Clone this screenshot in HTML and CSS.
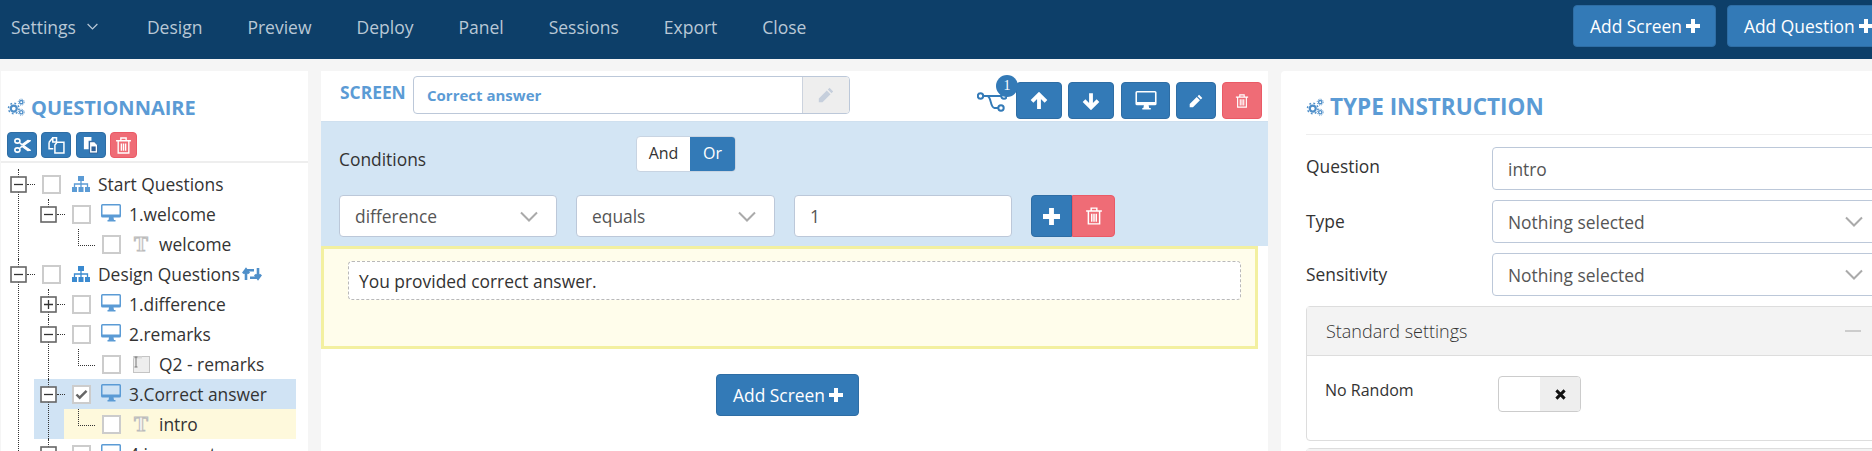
FILE: index.html
```html
<!DOCTYPE html>
<html lang="en">
<head>
  <meta charset="UTF-8" />
  <title>Questionnaire Designer</title>
  <link rel="stylesheet" href="styles.css">
</head>
<body>
  <svg class="sprites" width="0" height="0">
    <symbol id="i-cogs" viewBox="0 0 24 24">
      <circle cx="9" cy="14" r="4" fill="none" stroke="currentColor" stroke-width="3"/>
      <circle cx="9" cy="14" r="7" fill="none" stroke="currentColor" stroke-width="2" stroke-dasharray="2.4 3.1"/>
      <circle cx="19" cy="5.500" r="2.200" fill="none" stroke="currentColor" stroke-width="1.800"/>
      <circle cx="19" cy="5.500" r="4" fill="none" stroke="currentColor" stroke-width="1.300" stroke-dasharray="1.500 1.640"/>
      <circle cx="19" cy="19" r="2.200" fill="none" stroke="currentColor" stroke-width="1.800"/>
      <circle cx="19" cy="19" r="4" fill="none" stroke="currentColor" stroke-width="1.300" stroke-dasharray="1.500 1.640"/>
    </symbol>
    <symbol id="i-sitemap" viewBox="0 0 18 16">
      <rect x="6" y="0" width="6" height="5" fill="currentColor"/>
      <rect x="0" y="11" width="5" height="5" fill="currentColor"/>
      <rect x="6.500" y="11" width="5" height="5" fill="currentColor"/>
      <rect x="13" y="11" width="5" height="5" fill="currentColor"/>
      <path d="M9 5v6M2.500 11V8h13v3" fill="none" stroke="currentColor" stroke-width="1.300"/>
    </symbol>
    <symbol id="i-desktop" viewBox="0 0 20 18">
      <path fill-rule="evenodd" fill="currentColor" d="M1.500 0h17A1.500 1.500 0 0 1 20 1.500v10.500a1.500 1.500 0 0 1-1.500 1.500h-6l.5 2.500h1.500v1.500h-8v-1.500H7.500l.5-2.500H1.500A1.500 1.500 0 0 1 0 12V1.500A1.500 1.500 0 0 1 1.500 0zM1.500 1.500V10.500h17V1.500z"/>
    </symbol>
    <symbol id="i-scissors" viewBox="0 0 16 14">
      <ellipse cx="3.200" cy="2.800" rx="2.400" ry="2" fill="none" stroke="currentColor" stroke-width="1.500"/>
      <ellipse cx="3.200" cy="11.200" rx="2.400" ry="2" fill="none" stroke="currentColor" stroke-width="1.500"/>
      <path d="M5 4.200 15.500 11.500 13 11.800 7 7.500M5 9.800 15.500 2.500 13 2.200 7 6.500" fill="currentColor" stroke="currentColor" stroke-width="1"/>
    </symbol>
    <symbol id="i-copy" viewBox="0 0 16 16">
      <path d="M4.500.8h3.500v4H4.500zM1 5l3.500-4.200M1 5v6h4" fill="none" stroke="currentColor" stroke-width="1.400"/>
      <path d="M8.500 5h6.500v10H6.500V7.500z" fill="none" stroke="currentColor" stroke-width="1.400"/>
    </symbol>
    <symbol id="i-paste" viewBox="0 0 16 18">
      <path d="M1 0h8v4H6v9H1z" fill="currentColor"/>
      <path d="M7 5h5l3.500 3.500V17H7z" fill="currentColor" stroke="#2e5f97" stroke-width="1"/>
      <path d="M9 15h4.500v-5H9z" fill="#2e5f97"/>
    </symbol>
    <symbol id="i-trash" viewBox="0 0 14 16">
      <path d="M0 3.500h14M4.500 3.500V1h5v2.500M2 3.500V15h10V3.500M5 6v7M7 6v7M9 6v7" fill="none" stroke="currentColor" stroke-width="1.300"/>
    </symbol>
    <symbol id="i-up" viewBox="0 0 16 16">
      <path d="M8 15V2.500M1.800 8.300 8 2.200l6.200 6.100" fill="none" stroke="currentColor" stroke-width="3.400"/>
    </symbol>
    <symbol id="i-down" viewBox="0 0 16 16">
      <path d="M8 1v12.500M1.800 7.700 8 13.800l6.200-6.100" fill="none" stroke="currentColor" stroke-width="3.400"/>
    </symbol>
    <symbol id="i-pencil" viewBox="0 0 16 16">
      <path d="M11.500 .8 15.200 4.500 13.500 6.200 9.800 2.500zM8.800 3.500 12.500 7.200 4.500 15.200H.8V11.500z" fill="currentColor"/>
    </symbol>
    <symbol id="i-plus" viewBox="0 0 14 14">
      <path d="M7 0v14M0 7h14" fill="none" stroke="currentColor" stroke-width="4"/>
    </symbol>
    <symbol id="i-times" viewBox="0 0 12 12">
      <path d="M1.500 1.500 10.500 10.500M10.500 1.500 1.500 10.500" fill="none" stroke="currentColor" stroke-width="3.200"/>
    </symbol>
    <symbol id="i-retweet" viewBox="0 0 20 14">
      <path d="M4 13V3.200h8M1 6.500 4 2.500l3 4M16 1v9.800H8M13 7.500l3 4 3-4" fill="none" stroke="currentColor" stroke-width="2.600"/>
    </symbol>
    <symbol id="i-branch" viewBox="0 0 30 22">
      <circle cx="3.500" cy="6" r="2.700" fill="none" stroke="currentColor" stroke-width="2"/>
      <circle cx="27" cy="6" r="2.700" fill="none" stroke="currentColor" stroke-width="2"/>
      <circle cx="24" cy="18" r="2.700" fill="none" stroke="currentColor" stroke-width="2"/>
      <path d="M6.200 6h18M10.500 6c4 1 2.500 11.500 7 12h3.800" fill="none" stroke="currentColor" stroke-width="2"/>
    </symbol>
    <symbol id="i-chevron" viewBox="0 0 18 11">
      <path d="M1 1.500 9 9.500l8-8" fill="none" stroke="currentColor" stroke-width="2"/>
    </symbol>
    <symbol id="i-minusbox" viewBox="0 0 17 17">
      <rect x="1" y="1" width="15" height="15" fill="#fff" stroke="#666" stroke-width="1.600"/>
      <path d="M4 8.500h9" stroke="#333" stroke-width="1.300"/>
    </symbol>
    <symbol id="i-plusbox" viewBox="0 0 17 17">
      <rect x="1" y="1" width="15" height="15" fill="#fff" stroke="#666" stroke-width="1.600"/>
      <path d="M4 8.500h9M8.500 4v9" stroke="#333" stroke-width="1.300"/>
    </symbol>
    <symbol id="i-check" viewBox="0 0 14 12">
      <path d="M1.500 6 5 9.500 12.500 2" fill="none" stroke="currentColor" stroke-width="2.600"/>
    </symbol>
    <symbol id="i-textarea" viewBox="0 0 17 17">
      <rect x=".5" y=".5" width="16" height="16" fill="#eee" stroke="#c4c4c4"/>
      <path d="M0 1.500h9" stroke="#d8d8d8" stroke-width="2"/>
      <path d="M3 1v10M1.500 1h3M1.500 11h3" fill="none" stroke="#777" stroke-width="1"/>
    </symbol>
  </svg>

  <header class="topbar">
    <nav class="nav">
      <a class="nav-item nav-settings">Settings <svg class="nav-chev"><use href="#i-chevron"/></svg></a>
      <a class="nav-item">Design</a>
      <a class="nav-item">Preview</a>
      <a class="nav-item">Deploy</a>
      <a class="nav-item">Panel</a>
      <a class="nav-item">Sessions</a>
      <a class="nav-item">Export</a>
      <a class="nav-item">Close</a>
    </nav>
    <div class="top-actions">
      <button class="btn btn-add">Add Screen <svg class="ico-plus"><use href="#i-plus"/></svg></button>
      <button class="btn btn-add">Add Question <svg class="ico-plus"><use href="#i-plus"/></svg></button>
    </div>
  </header>

  <main class="layout">
    <section class="panel tree-panel">
      <h2 class="tree-title"><svg class="ico-cogs"><use href="#i-cogs"/></svg>QUESTIONNAIRE</h2>
      <div class="tree-tools">
        <button class="btn tool"><svg class="tool-ico"><use href="#i-scissors"/></svg></button>
        <button class="btn tool"><svg class="tool-ico"><use href="#i-copy"/></svg></button>
        <button class="btn tool"><svg class="tool-ico"><use href="#i-paste"/></svg></button>
        <button class="btn tool tool-del"><svg class="tool-ico"><use href="#i-trash"/></svg></button>
      </div>
      <ul class="tree">
        <li class="node">
          <div class="row">
            <svg class="exp"><use href="#i-minusbox"/></svg>
            <span class="check"></span>
            <svg class="ico-map"><use href="#i-sitemap"/></svg>
            <span>Start Questions</span>
          </div>
          <ul class="sub">
            <li class="node node-end">
              <div class="row">
                <svg class="exp"><use href="#i-minusbox"/></svg>
                <span class="check"></span>
                <svg class="ico-screen"><use href="#i-desktop"/></svg>
                <span>1.welcome</span>
              </div>
              <ul class="sub">
                <li class="leaf">
                  <div class="row row-leaf">
                    <span class="check"></span>
                    <span class="t-icon">T</span>
                    <span>welcome</span>
                  </div>
                </li>
              </ul>
            </li>
          </ul>
        </li>
        <li class="node">
          <div class="row">
            <svg class="exp"><use href="#i-minusbox"/></svg>
            <span class="check"></span>
            <svg class="ico-map ico-map-on"><use href="#i-sitemap"/></svg>
            <span>Design Questions</span><svg class="ico-loop"><use href="#i-retweet"/></svg>
          </div>
          <ul class="sub">
            <li class="node">
              <div class="row">
                <svg class="exp"><use href="#i-plusbox"/></svg>
                <span class="check"></span>
                <svg class="ico-screen"><use href="#i-desktop"/></svg>
                <span>1.difference</span>
              </div>
            </li>
            <li class="node">
              <div class="row">
                <svg class="exp"><use href="#i-minusbox"/></svg>
                <span class="check"></span>
                <svg class="ico-screen"><use href="#i-desktop"/></svg>
                <span>2.remarks</span>
              </div>
              <ul class="sub">
                <li class="leaf">
                  <div class="row row-leaf">
                    <span class="check"></span>
                    <svg class="ta-icon"><use href="#i-textarea"/></svg>
                    <span>Q2 - remarks</span>
                  </div>
                </li>
              </ul>
            </li>
            <li class="node selected">
              <div class="row">
                <svg class="exp"><use href="#i-minusbox"/></svg>
                <span class="check"><svg class="check-mark"><use href="#i-check"/></svg></span>
                <svg class="ico-screen"><use href="#i-desktop"/></svg>
                <span>3.Correct answer</span>
              </div>
              <ul class="sub">
                <li class="leaf current">
                  <div class="row row-leaf">
                    <span class="check"></span>
                    <span class="t-icon">T</span>
                    <span>intro</span>
                  </div>
                </li>
              </ul>
            </li>
            <li class="node">
              <div class="row">
                <svg class="exp"><use href="#i-minusbox"/></svg>
                <span class="check"></span>
                <svg class="ico-screen"><use href="#i-desktop"/></svg>
                <span>4.incorrect answer</span>
              </div>
            </li>
          </ul>
        </li>
      </ul>
    </section>

    <section class="panel screen-panel">
      <div class="screen-head">
        <label class="screen-label">SCREEN</label>
        <div class="screen-name">
          <span class="screen-value">Correct answer</span>
          <span class="screen-addon"><svg class="addon-ico"><use href="#i-pencil"/></svg></span>
        </div>
        <div class="screen-tools">
          <span class="branch">
            <svg class="branch-ico"><use href="#i-branch"/></svg>
            <span class="badge">1</span>
          </span>
          <button class="btn head-btn"><svg class="head-ico"><use href="#i-up"/></svg></button>
          <button class="btn head-btn"><svg class="head-ico"><use href="#i-down"/></svg></button>
          <button class="btn head-btn head-wide"><svg class="screen-ico"><use href="#i-desktop"/></svg></button>
          <button class="btn head-btn head-small"><svg class="pen-ico"><use href="#i-pencil"/></svg></button>
          <button class="btn head-btn head-small tool-del"><svg class="pen-ico"><use href="#i-trash"/></svg></button>
        </div>
      </div>

      <div class="conditions">
        <div class="cond-top">
          <span class="cond-label">Conditions</span>
          <div class="andor">
            <span class="andor-opt">And</span>
            <span class="andor-opt andor-on">Or</span>
          </div>
        </div>
        <div class="cond-row">
          <div class="field cond-var">difference<svg class="chev"><use href="#i-chevron"/></svg></div>
          <div class="field cond-op">equals<svg class="chev"><use href="#i-chevron"/></svg></div>
          <div class="field cond-val">1</div>
          <div class="cond-btns">
            <button class="btn cond-btn"><svg class="cond-ico"><use href="#i-plus"/></svg></button>
            <button class="btn cond-btn tool-del"><svg class="cond-trash"><use href="#i-trash"/></svg></button>
          </div>
        </div>
      </div>

      <div class="question-box">
        <div class="question-text">You provided correct answer.</div>
      </div>

      <div class="screen-foot">
        <button class="btn btn-add">Add Screen <svg class="ico-plus"><use href="#i-plus"/></svg></button>
      </div>
    </section>

    <section class="panel type-panel">
      <h2 class="type-title"><svg class="ico-cogs-sm"><use href="#i-cogs"/></svg>TYPE INSTRUCTION</h2>
      <div class="form-row">
        <label>Question</label>
        <div class="field">intro</div>
      </div>
      <div class="form-row">
        <label>Type</label>
        <div class="field field-muted">Nothing selected<svg class="chev"><use href="#i-chevron"/></svg></div>
      </div>
      <div class="form-row">
        <label>Sensitivity</label>
        <div class="field field-muted">Nothing selected<svg class="chev"><use href="#i-chevron"/></svg></div>
      </div>
      <div class="settings">
        <div class="settings-head">
          <span>Standard settings</span>
          <span class="settings-min"></span>
        </div>
        <div class="settings-body">
          <label>No Random</label>
          <div class="toggle">
            <span class="toggle-off"></span>
            <span class="toggle-x"><svg class="x-ico"><use href="#i-times"/></svg></span>
          </div>
        </div>
      </div>
      <div class="settings settings-next">
        <div class="settings-head"></div>
      </div>
    </section>
  </main>
</body>
</html>
```

FILE: styles.css
```css
* {
  box-sizing: border-box;
}
html, body {
  height: 100%;
  overflow: hidden;
}
body {
  margin: 0;
  background: #f5f5f5;
  color: #333;
  font-family: "Open Sans", "Liberation Sans", sans-serif;
  font-size: 17.4px;
}
ul {
  list-style: none;
  margin: 0;
  padding: 0;
}
button {
  font-family: inherit;
}
.sprites {
  position: absolute;
}
.btn {
  display: inline-flex;
  align-items: center;
  justify-content: center;
  background: #337ab7;
  border: 1px solid #2e6da4;
  border-radius: 4px;
  color: #fff;
  padding: 0;
  font-size: 17.4px;
}
.btn-add {
  height: 42px;
  padding: 0 15px 0 16px;
  gap: 4px;
  flex: none;
}
.ico-plus {
  width: 14px;
  height: 14px;
}
.tool-del {
  background: #ef6c76;
  border-color: #ea5a66;
}

/* top bar */
.topbar {
  height: 59px;
  background: #0d3f69;
  display: flex;
  align-items: flex-start;
}
.nav {
  flex: 0 0 1573px;
  display: flex;
  height: 59px;
  align-items: center;
  padding-left: 11px;
  padding-bottom: 6px;
}
.nav-item {
  color: #b9c8d6;
  font-size: 17.5px;
  margin-right: 45px;
}
.nav-settings {
  display: flex;
  align-items: center;
  gap: 11px;
  margin-right: 49px;
}
.nav-chev {
  width: 11px;
  height: 7px;
  color: #b9c8d6;
}
.top-actions {
  display: flex;
  gap: 11px;
  padding-top: 5px;
  flex: none;
}

/* page columns */
.layout {
  display: grid;
  grid-template-columns: 307px 947px 620px;
  column-gap: 13px;
  margin: 12px 0 0 1px;
  height: 380px;
}
.panel {
  background: #fff;
  overflow: hidden;
}

/* questionnaire tree */
.tree-panel {
  padding: 0 12px 0 0;
}
.tree-title {
  margin: 24px 0 0 6px;
  height: 24px;
  display: flex;
  align-items: center;
  gap: 6px;
  color: #5b9bd5;
  font-size: 20px;
  font-weight: 700;
}
.ico-cogs {
  width: 18px;
  height: 18px;
  color: #4f8fc9;
}
.tree-tools {
  display: flex;
  gap: 4.300px;
  margin: 13px 0 0 6px;
}
.tool {
  width: 30px;
  height: 26px;
}
.tool-del {
  width: 27px;
}
.tool-ico {
  width: 17px;
  height: 17px;
}
.tree {
  border-top: 2px solid #eee;
  margin: 3px -12px 0 0;
  padding: 6px 12px 0 3px;
}
.node, .leaf {
  position: relative;
}
.node::before {
  content: "";
  position: absolute;
  left: 14px;
  top: 0;
  bottom: 0;
  border-left: 1px dotted #333;
}
.node-end::before {
  bottom: auto;
  height: 10px;
}
.sub {
  margin-left: 30px;
}
.row {
  position: relative;
  display: flex;
  align-items: center;
  height: 30px;
  padding-left: 6px;
  white-space: nowrap;
}
.exp {
  position: relative;
  width: 17px;
  height: 17px;
  margin-right: 15px;
  flex: none;
}
.row:not(.row-leaf)::after {
  content: "";
  position: absolute;
  left: 23px;
  top: 15px;
  width: 8px;
  border-top: 1px dotted #333;
}
.check {
  display: inline-flex;
  align-items: center;
  justify-content: center;
  width: 19px;
  height: 19px;
  border: 2px solid #ccc;
  background: #fff;
  flex: none;
}
.check-mark {
  width: 13px;
  height: 11px;
  color: #666;
}
.ico-map {
  width: 18px;
  height: 16px;
  margin: 0 8px 0 11px;
  color: #5b9bd5;
}
.ico-map-on {
  color: #3a8ad0;
}
.ico-screen {
  width: 20px;
  height: 18px;
  margin: -3px 8px 0 10px;
  color: #5b9bd5;
}
.ico-loop {
  width: 20px;
  height: 14px;
  margin-left: 2px;
  color: #4f8fc9;
}
.row-leaf {
  padding-left: 38px;
}
.row-leaf::before {
  content: "";
  position: absolute;
  left: 14px;
  top: 0;
  width: 16px;
  height: 16px;
  border-left: 1px dotted #333;
  border-bottom: 1px dotted #333;
}
.t-icon {
  width: 14px;
  margin: 0 11px 0 13px;
  font-family: "Liberation Serif", serif;
  font-size: 21px;
  font-weight: 700;
  line-height: 1;
  color: #f2f2f2;
  -webkit-text-stroke: 1px #bbb;
}
.ta-icon {
  width: 17px;
  height: 17px;
  margin: 0 9px 0 12px;
}
.selected {
  background: #d0e3f4;
}
.selected > .sub {
  background: #d0e3f4;
}
.current {
  background: #fef9dc;
}

/* screen column */
.screen-head {
  height: 50px;
  display: flex;
  padding: 5px 6px 0 19px;
}
.screen-label {
  width: 73px;
  color: #5b9bd5;
  font-size: 17.4px;
  font-weight: 700;
  line-height: 32px;
}
.screen-name {
  width: 437px;
  height: 38px;
  display: flex;
  border: 1px solid #bcc8d9;
  border-radius: 4px;
  overflow: hidden;
}
.screen-value {
  flex: 1;
  padding-left: 13px;
  color: #5b9bd5;
  font-size: 15px;
  font-weight: 700;
  line-height: 37px;
}
.screen-addon {
  width: 47px;
  display: flex;
  align-items: center;
  justify-content: center;
  background: #eee;
  border-left: 1px solid #ccd3de;
}
.addon-ico {
  width: 16px;
  height: 16px;
  color: #c6cfdc;
}
.screen-tools {
  margin-left: auto;
  display: flex;
  gap: 6px;
  padding-top: 6px;
}
.branch {
  position: relative;
  width: 30px;
  height: 22px;
  margin: 8px 3px 0 0;
}
.branch-ico {
  width: 30px;
  height: 22px;
  color: #337ab7;
}
.badge {
  position: absolute;
  right: -11px;
  top: -15px;
  width: 22px;
  height: 22px;
  border-radius: 50%;
  background: #337ab7;
  color: #fff;
  font-family: "Liberation Serif", serif;
  font-size: 14px;
  line-height: 22px;
  text-align: center;
}
.head-btn {
  width: 46px;
  height: 37px;
}
.head-wide {
  width: 49px;
  margin-left: 1px;
}
.head-small {
  width: 40px;
}
.head-ico {
  width: 18px;
  height: 18px;
}
.screen-ico {
  width: 22px;
  height: 19px;
}
.pen-ico {
  width: 14px;
  height: 14px;
}

/* conditions */
.conditions {
  height: 125px;
  background: #d3e5f4;
  padding: 14px 0 0 18px;
  border-top: 1px solid #cfe0ef;
}
.cond-top {
  display: flex;
  height: 36px;
}
.cond-label {
  width: 297px;
  padding-top: 9px;
  line-height: 29px;
}
.andor {
  display: flex;
  width: 100px;
  height: 36px;
  border: 1px solid #c8d4e2;
  border-radius: 4px;
  overflow: hidden;
  font-size: 16px;
  line-height: 32px;
  text-align: center;
  background: #fff;
}
.andor-opt {
  width: 53px;
}
.andor-on {
  flex: 1;
  background: #337ab7;
  color: #fff;
}
.cond-row {
  display: flex;
  margin-top: 23px;
}
.field {
  position: relative;
  display: flex;
  align-items: center;
  height: 42px;
  padding-left: 15px;
  background: #fff;
  border: 1px solid #bcc8d9;
  border-radius: 4px;
  color: #555;
  font-size: 17.4px;
}
.chev {
  width: 18px;
  height: 11px;
  margin-left: auto;
  margin-right: 18px;
  color: #aaa;
}
.cond-var {
  width: 218px;
}
.cond-op {
  width: 199px;
  margin-left: 19px;
}
.cond-val {
  width: 218px;
  margin-left: 19px;
}
.cond-btns {
  display: flex;
  margin-left: 19px;
}
.cond-btn {
  width: 41px;
  height: 42px;
  border-radius: 4px 0 0 4px;
}
.cond-btn.tool-del {
  width: 43px;
  border-radius: 0 4px 4px 0;
}
.cond-ico {
  width: 17px;
  height: 17px;
}
.cond-trash {
  width: 16px;
  height: 18px;
}

/* yellow question box */
.question-box {
  width: 937px;
  height: 103px;
  background: #fffdeb;
  border: 3px solid #f3f0a0;
  padding: 12px 14px 0 24px;
}
.question-text {
  height: 39px;
  background: #fff;
  border: 1px dashed #b9b9b9;
  border-radius: 4px;
  padding-left: 10px;
  line-height: 39px;
  color: #333;
}
.screen-foot {
  display: flex;
  justify-content: center;
  padding: 25px 14px 0 0;
}

/* type column */
.type-panel {
  border-radius: 4px 0 0 0;
  padding: 0 19px 0 25px;
}
.type-title {
  margin: 21px 0 0;
  height: 29px;
  display: flex;
  align-items: center;
  gap: 6px;
  color: #5b9bd5;
  font-size: 22.5px;
  font-weight: 700;
}
.ico-cogs-sm {
  width: 18px;
  height: 18px;
  color: #4f8fc9;
}
.form-row {
  display: grid;
  grid-template-columns: 186px 1fr;
  margin-bottom: 10px;
}
.type-title + .form-row {
  border-top: 1px solid #eee;
  margin-top: 13px;
  padding-top: 12px;
}
.form-row label {
  padding-top: 9px;
  line-height: 24px;
}
.type-title + .form-row label {
  padding-top: 7px;
}
.form-row .field {
  height: 43px;
}
.field-muted {
  color: #555;
}
.settings {
  border: 1px solid #ddd;
  border-radius: 4px;
  margin-top: 10px;
  height: 135px;
}
.settings-head {
  height: 49px;
  display: flex;
  align-items: center;
  justify-content: space-between;
  padding: 0 19px;
  background: #f3f3f3;
  border-bottom: 1px solid #ddd;
  font-size: 18px;
  font-weight: 300;
}
.settings-min {
  width: 16px;
  border-top: 2px solid #ccc;
  margin-right: 1px;
}
.settings-body {
  display: flex;
  padding: 20px 0 0 18px;
  font-size: 16px;
}
.settings-body label {
  width: 173px;
  line-height: 29px;
}
.toggle {
  display: flex;
  width: 83px;
  height: 36px;
  border: 1px solid #ccc;
  border-radius: 4px;
  overflow: hidden;
}
.toggle-off {
  width: 41px;
}
.toggle-x {
  flex: 1;
  display: flex;
  align-items: center;
  justify-content: center;
  background: #eee;
}
.x-ico {
  width: 11px;
  height: 11px;
  color: #111;
}
.settings-next {
  margin-top: 7px;
}
```
